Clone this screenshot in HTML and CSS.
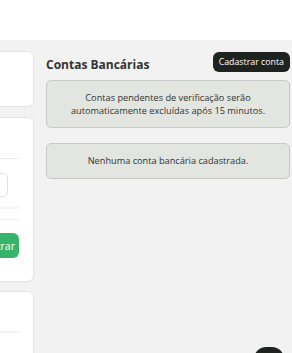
FILE: index.html
```html
<!DOCTYPE html>
<html lang="pt-BR">
<head>
    <meta charset="UTF-8">
    <meta name="viewport" content="width=device-width, initial-scale=1.0">
    <title>Contas Bancárias</title>
    <link rel="stylesheet" href="styles.css">
</head>
<body>
    <header class="topbar"></header>

    <main class="page">
        <aside class="side">
            <div class="card card-small"></div>

            <div class="card card-form">
                <div class="form-head"></div>
                <div class="form-body">
                    <div class="input"></div>
                    <div class="hint"></div>
                </div>
                <div class="form-foot">
                    <button class="btn-green"><span>Cadastrar</span></button>
                </div>
            </div>

            <div class="card card-last">
                <div class="last-head"></div>
            </div>
        </aside>

        <section class="content">
            <div class="content-head">
                <h2>Contas Bancárias</h2>
                <button class="btn-dark">Cadastrar conta</button>
            </div>

            <div class="notice">
                Contas pendentes de verificação serão automaticamente excluídas após 15 minutos.
            </div>

            <div class="notice notice-empty">
                Nenhuma conta bancária cadastrada.
            </div>
        </section>
    </main>

    <div class="fab"></div>
</body>
</html>
```

FILE: styles.css
```css
* {
    box-sizing: border-box;
}
body {
    margin: 0;
    font-family: "Open Sans", Arial, sans-serif;
    background-color: #f2f2f2;
    color: #333;
    height: 353px;
    overflow: hidden;
    position: relative;
}
.topbar {
    height: 40px;
    background: #fff;
}
.page {
    display: grid;
    grid-template-columns: 34px 1fr;
    gap: 12px;
    padding: 11px 2px 0 0;
}
.side {
    display: flex;
    flex-direction: column;
    gap: 10px;
}
.card {
    background: #fff;
    border: 1px solid #e4e4e4;
    border-left: none;
    border-radius: 0 6px 6px 0;
}
.card-small {
    height: 56px;
}
.card-form {
    height: 165px;
    padding-right: 14px;
}
.form-head {
    height: 41px;
    border-bottom: 1px solid #ececec;
}
.form-body {
    padding: 14px 0 10px;
    border-bottom: 1px solid #ececec;
}
.input {
    width: 8px;
    height: 24px;
    border: 1px solid #e2e2e2;
    border-left: none;
    border-radius: 0 5px 5px 0;
}
.hint {
    height: 3px;
    margin-top: 9px;
    background: #f6f6f2;
}
.form-foot {
    padding-top: 13px;
}
.btn-green {
    display: flex;
    justify-content: flex-end;
    align-items: center;
    width: 19px;
    height: 25px;
    border: none;
    padding: 0 4px 0 0;
    background: #34b56b;
    color: #fff;
    font-family: inherit;
    font-size: 10.5px;
    border-radius: 0 6px 6px 0;
    overflow: hidden;
}
.btn-green span {
    flex-shrink: 0;
}
.card-last {
    height: 80px;
    padding-right: 14px;
    margin-top: -1px;
}
.last-head {
    height: 41px;
    border-bottom: 2px solid #f3f3f3;
}
.content-head {
    display: flex;
    justify-content: space-between;
    align-items: center;
    height: 21px;
}
.content-head h2 {
    margin: 6px 0 0;
    font-size: 12px;
    font-weight: 700;
    color: #333;
}
.btn-dark {
    background: #1f231f;
    color: #fff;
    border: none;
    border-radius: 6px;
    font-family: inherit;
    font-size: 8.8px;
    padding: 0 6px;
    height: 20px;
}
.notice {
    margin-top: 8px;
    background: #e2e5e0;
    border: 1px solid #c6c9c5;
    border-radius: 5px;
    text-align: center;
    font-size: 9.2px;
    line-height: 13px;
    padding: 10px 20px;
    color: #333;
}
.notice-empty {
    margin-top: 15px;
    padding: 10px 10px 11px;
}
.fab {
    position: absolute;
    left: 254px;
    top: 347px;
    width: 30px;
    height: 30px;
    border-radius: 12px;
    background: #1f231f;
}
```
